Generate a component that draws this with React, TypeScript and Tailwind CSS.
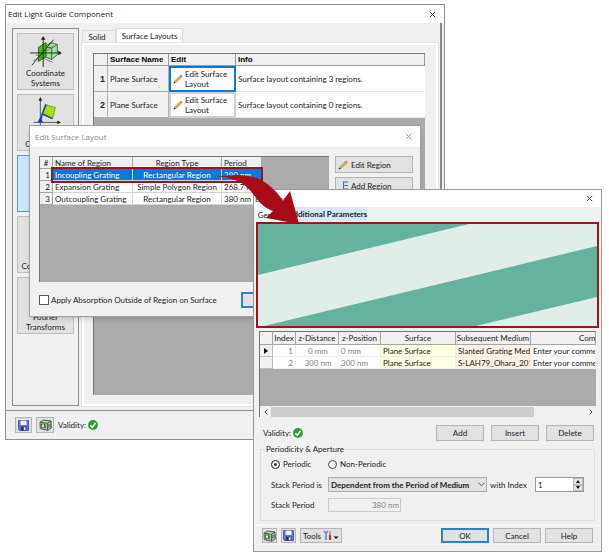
import React from "react";

const btn = "border border-[#b4b4b4] bg-[#e1e1e1] flex items-center justify-center";

function Pencil({ size = 10 }: { size?: number }) {
  return (
    <svg width={size} height={size} viewBox="0 0 10 10" className="shrink-0">
      <path d="M1 9 L2 6.6 L7.4 1.2 L9 2.8 L3.5 8.1 Z" fill="#edc873" stroke="#8a6a35" strokeWidth=".5" />
      <path d="M7 1.6 L8 .6 L9.6 2.2 L8.6 3.2 Z" fill="#c98a8a" />
      <path d="M.6 9.5 L1.5 7.4 L2.7 8.6 Z" fill="#222" />
      <path d="M2.8 7.6 L8.2 2.4" stroke="#7d6028" strokeWidth=".5" />
    </svg>
  );
}

function SaveIcon() {
  return (
    <svg width="11" height="11" viewBox="0 0 11 11">
      <path d="M.5 .5 H10.5 V10.5 H1.5 L.5 9.5 Z" fill="#6674d6" stroke="#3d46a8" strokeWidth=".8" />
      <path d="M2.5 .6 H8.5 V5 H2.5 Z" fill="#eef0ff" />
      <path d="M3 6.6 H8.4 V10.5 H3 Z" fill="#2a2f70" />
      <path d="M5.8 7.2 H7.5 V10.2 H5.8 Z" fill="#e9ebfa" />
    </svg>
  );
}

function BoxIcon() {
  return (
    <svg width="13" height="12" viewBox="0 0 13 12">
      <path d="M1 3.2 L4.5 1 L12 2 L12.3 9 L8.5 11.3 L1.3 9.6 Z" fill="#b9cfae" stroke="#3f4f3f" strokeWidth=".9" />
      <path d="M1 3.2 L8.3 4.4 L12 2 M8.3 4.4 L8.5 11.3" stroke="#3f4f3f" strokeWidth=".9" fill="none" />
      <path d="M2.5 5 H5.5 V8.6 H2.5 Z" fill="#e8efc8" stroke="#2f5340" strokeWidth=".8" />
      <path d="M6.4 5.6 V9.4 M9.8 5 V8.8 M11 4.4 V8" stroke="#3a6a52" strokeWidth=".9" />
    </svg>
  );
}

function Check() {
  return (
    <svg width="10" height="10" viewBox="0 0 10 10" className="shrink-0">
      <circle cx="5" cy="5" r="4.9" fill="#2c9a2f" />
      <path d="M2.4 5.2 L4.3 7.2 L7.6 2.8" fill="none" stroke="#fff" strokeWidth="1.6" />
    </svg>
  );
}

function Close({ color }: { color: string }) {
  return (
    <svg width="7" height="7" viewBox="0 0 7 7">
      <path d="M.8 .8 L6.2 6.2 M6.2 .8 L.8 6.2" stroke={color} strokeWidth="1" />
    </svg>
  );
}

function CoordinateIcon() {
  return (
    <svg width="32" height="32" viewBox="0 0 34 34">
      <path d="M16 11 L22 7 L29 9 L29 20 L23 25 L16 22 Z" fill="#a5dba0" stroke="#2f5c2c" strokeWidth=".9" />
      <path d="M16 11 L23 13 L29 9 M23 13 V25" fill="none" stroke="#2f5c2c" strokeWidth=".9" />
      <path d="M9 12 L17 7 V22 L9 27 Z" fill="#3fc213" stroke="#1e5a10" strokeWidth=".9" />
      <path d="M0 18 H32 M14 33 V2 M2 31 L25 4" stroke="#222" strokeWidth="1" fill="none" />
      <path d="M30 15.5 L34 18 L30 20.5 Z M11.5 4 L14 0 L16.5 4 Z" fill="#222" />
      <path d="M3 27 L24 11 M6 20 L24 28" stroke="#444" strokeWidth=".6" />
    </svg>
  );
}

function PositionIcon() {
  return (
    <svg width="32" height="32" viewBox="0 0 34 34">
      <path d="M11 31 V3 M4 27 H31" stroke="#444" strokeWidth=".9" />
      <path d="M9 4 L11 0 L13 4 Z M29 25 L33 27 L29 29 Z" fill="#222" />
      <path d="M16 8 L27 11 L24 23 L13 18 Z" fill="#a4e00c" stroke="#578a12" strokeWidth=".7" />
      <path d="M11 27 L13 18 L24 23 M13 18 L17 8" stroke="#1b45b4" strokeWidth="1.6" fill="none" />
      <path d="M8 27 L11 21 L14 27 Z" fill="#1b45b4" />
    </svg>
  );
}

function SideButton({ label, icon, active }: { label: string[]; icon: React.ReactNode; active?: boolean }) {
  return (
    <button
      className={
        "flex h-[57px] w-full shrink-0 flex-col items-center border pt-[2px] leading-[10px] " +
        (active ? "border-[#4a9be0] bg-[#cce4f7]" : "border-[#bdbdbd] bg-[#e1e1e1]")
      }
    >
      <span className="flex h-8 shrink-0 items-center">{icon}</span>
      <span className="whitespace-nowrap">
        {label.map((l) => (
          <span key={l} className="block">{l}</span>
        ))}
      </span>
    </button>
  );
}

function ComponentWindow() {
  const rows = [3, 0];
  return (
    <section className="absolute top-1 left-[5px] flex h-[436px] w-[440px] flex-col border border-[#8f8f8f] bg-[#f0f0f0]">
      <header className="flex h-[18px] shrink-0 items-center justify-between bg-white pr-2 pl-[2px]">
        <h1 className="font-['Open_Sans',sans-serif]">Edit Light Guide Component</h1>
        <button aria-label="Close"><Close color="#444" /></button>
      </header>
      <div className="mr-[2px] flex min-h-0 flex-1 flex-col border-r-2 border-[#8a8a8a]">
        <div className="flex min-h-0 flex-1 gap-[3px] pt-[5px] pr-[2px] pb-1 pl-[6px]">
          <nav className="flex w-[67px] shrink-0 flex-col gap-1 border border-[#8d8d8d] p-1">
            <SideButton label={["Coordinate", "Systems"]} icon={<CoordinateIcon />} />
            <SideButton label={["Position /", "Orientation"]} icon={<PositionIcon />} />
            <SideButton
              active
              label={["Light", "Path"]}
              icon={
                <svg width="34" height="30" viewBox="0 0 34 30">
                  <circle cx="17" cy="15" r="14" fill="none" stroke="#24489c" strokeWidth="2" />
                </svg>
              }
            />
            <SideButton label={["Channel", "Configuration"]} icon={null} />
            <SideButton label={["Fourier", "Transforms"]} icon={null} />
          </nav>
          <div className="flex min-w-0 flex-1 flex-col">
            <div role="tablist" className="flex h-[15px] shrink-0 items-end">
              <button role="tab" className="h-[13px] w-[34px] border border-b-0 border-[#dcdcdc] bg-[#f0f0f0] pr-1">Solid</button>
              <button role="tab" className="h-[15px] w-[67px] border border-b-0 border-[#dcdcdc] bg-white">Surface Layouts</button>
            </div>
            <div className="flex-1 border-2 border-white bg-[#f0f0f0] pt-2 pr-[11px] pb-[9px] pl-[9px] outline outline-[#e2e2e2]">
              <div className="h-full border-t border-l border-[#777] bg-[#ababab]">
                <table className="w-full table-fixed border-separate border-spacing-0 text-left whitespace-nowrap">
                  <colgroup>
                    <col className="w-[14px]" />
                    <col className="w-[61px]" />
                    <col className="w-[67px]" />
                    <col />
                  </colgroup>
                  <thead>
                    <tr className="h-3 bg-[#f0f0f0] font-['Liberation_Sans',sans-serif] text-black">
                      <th className="border-r border-b border-[#9a9a9a]" />
                      <th className="border-r border-b border-[#9a9a9a] pl-[2px]">Surface Name</th>
                      <th className="border-r border-b border-[#9a9a9a] pl-[2px]">Edit</th>
                      <th className="border-r border-b border-[#9a9a9a] pl-[2px]">Info</th>
                    </tr>
                  </thead>
                  <tbody>
                    {rows.map((n, i) => (
                      <tr key={n} className="h-[26px]">
                        <th className="border-r border-b border-[#b0b0b0] bg-[#f0f0f0] pr-[2px] text-right font-['Liberation_Sans',sans-serif] text-[9px]">{i + 1}</th>
                        <td className="border-r border-b border-[#b0b0b0] bg-[#f0f0f0] pl-[2px]">Plane Surface</td>
                        <td className="bg-white">
                          <button
                            className={
                              "flex h-[26px] w-full items-center gap-[2px] bg-[#fdfdfd] pl-[2px] text-left leading-[10px] " +
                              (i === 0 ? "border-2 border-[#1177d0]" : "border-2 border-[#d0d0d0]")
                            }
                          >
                            <Pencil />
                            <span>Edit Surface<br />Layout</span>
                          </button>
                        </td>
                        <td className="border-b border-[#e8e8e8] bg-white pl-[2px]">Surface layout containing {n} regions.</td>
                      </tr>
                    ))}
                  </tbody>
                </table>
              </div>
            </div>
          </div>
        </div>
        <footer className="flex h-[29px] shrink-0 items-center border-t border-[#8d8d8d] pl-[9px]">
          <button aria-label="Save" className={btn + " h-4 w-[17px]"}><SaveIcon /></button>
          <button aria-label="View" className={btn + " ml-1 h-4 w-[18px]"}><BoxIcon /></button>
          <span className="mr-[2px] ml-1">Validity:</span>
          <Check />
        </footer>
      </div>
    </section>
  );
}

function LayoutWindow() {
  const rows = [
    ["Incoupling Grating", "Rectangular Region", "380 nm"],
    ["Expansion Grating", "Simple Polygon Region", "268.7 nm"],
    ["Outcoupling Grating", "Rectangular Region", "380 nm"],
  ];
  return (
    <section className="absolute top-[125px] left-[29px] flex h-[192px] w-[392px] flex-col border border-[#a0a0a0] bg-[#f0f0f0] shadow-md">
      <header className="flex h-[21px] shrink-0 items-center justify-between bg-white pr-2 pl-[5px]">
        <h2 className="font-['Open_Sans',sans-serif] text-[#8c8c8c]">Edit Surface Layout</h2>
        <button aria-label="Close"><Close color="#999" /></button>
      </header>
      <div className="flex gap-[6px] pt-[9px] pr-[7px] pl-[9px]">
        <div className="relative h-[126px] flex-1 border-t border-l border-[#777] bg-[#ababab]">
          <table className="table-fixed border-separate border-spacing-0 whitespace-nowrap">
            <colgroup>
              <col className="w-[13px]" />
              <col className="w-20" />
              <col className="w-[89px]" />
              <col className="w-10" />
            </colgroup>
            <thead>
              <tr className="h-3 bg-[#f0f0f0]">
                {["#", "Name of Region", "Region Type", "Period"].map((h, i) => (
                  <th
                    key={h}
                    className={"overflow-hidden border-r border-b border-[#a5a5a5] px-[2px] font-normal " + (i % 2 ? "text-left" : "text-center")}
                  >
                    {h}
                  </th>
                ))}
              </tr>
            </thead>
            <tbody>
              {rows.map((r, i) => (
                <tr key={r[0]} className={"h-3 " + (i === 0 ? "bg-[#0f78d4] text-white" : "bg-white")}>
                  <th className="border-r border-b border-[#a5a5a5] bg-[#f0f0f0] pr-[2px] text-right font-normal text-[#222]">{i + 1}</th>
                  <td className="border-r border-b border-[#d4d4d4] pl-[2px]">{r[0]}</td>
                  <td className="border-r border-b border-[#d4d4d4] text-center">{r[1]}</td>
                  <td className="overflow-hidden border-r border-b border-[#d4d4d4] pl-[2px]">{r[2]}</td>
                </tr>
              ))}
            </tbody>
          </table>
          <div className="absolute top-[10px] left-[11px] h-4 w-[212px] border-2 border-[#9b1420]" />
        </div>
        <div className="flex w-[78px] shrink-0 flex-col gap-1">
          <button className="flex h-[17px] items-center gap-[3px] border border-[#b4b4b4] bg-[#e1e1e1] pl-[2px]">
            <Pencil />
            Edit Region
          </button>
          <button className="flex h-[17px] items-center gap-[3px] border border-[#b4b4b4] bg-[#e1e1e1] pl-[2px]">
            <svg width="10" height="10" viewBox="0 0 10 10"><path d="M5 1 H10 M5 4.5 H10 M5 8 H10 M5.5 1 V8 M0 8.5 H3" stroke="#4c6e96" fill="none" /></svg>
            Add Region
          </button>
        </div>
      </div>
      <div className="flex items-center pt-[10px] pl-[9px]">
        <input id="absorb" type="checkbox" className="h-[10px] w-[10px] appearance-none border border-[#555] bg-white" />
        <label htmlFor="absorb" className="ml-[2px] w-[190px]">Apply Absorption Outside of Region on Surface</label>
        <button className="h-4 w-12 border-2 border-[#2b83cc] bg-[#e1e1e1]">OK</button>
      </div>
    </section>
  );
}

function StackWindow() {
  const heads = ["", "Index", "z-Distance", "z-Position", "Surface", "Subsequent Medium", "Comment"];
  const rows = [
    ["1", "0 mm", "0 mm", "Plane Surface", "Slanted Grating Medium", "Enter your comment here"],
    ["2", "300 nm", "300 nm", "Plane Surface", "S-LAH79_Ohara_2016 in", "Enter your comment here"],
  ];
  const cell = "overflow-hidden border-b border-r border-[#eee] pl-[2px] ";
  return (
    <section className="absolute top-[189px] left-[253px] flex h-[363px] w-[349px] flex-col border border-[#9a9a9a] bg-[#f0f0f0]">
      <header className="flex h-[17px] shrink-0 items-center justify-between bg-white pr-2 pl-px">
        <h2 className="font-['Open_Sans',sans-serif]">Edit Stack</h2>
        <button aria-label="Close"><Close color="#444" /></button>
      </header>
      <div role="tablist" className="flex h-[15px] shrink-0 pl-[2px]">
        <button role="tab" className="h-[15px] w-[31px] bg-[#fafafa]">General</button>
        <button role="tab" className="h-[14px] w-20 border border-[#dce6ef] bg-[#d9e8f7] text-right font-bold whitespace-nowrap">Additional Parameters</button>
      </div>
      <div className="mx-[2px] h-[106px] shrink-0 border-2 border-[#9b1420]">
        <svg className="block h-full w-full" viewBox="258 224 339 102" preserveAspectRatio="none">
          <rect x="258" y="224" width="339" height="102" fill="#e0eeea" />
          <path d="M258 224 H469 L258 275 Z" fill="#65b39e" />
          <path d="M264 326 L597 246 V297 L476 326 Z" fill="#65b39e" />
        </svg>
      </div>
      <div className="mx-[5px] mt-[3px] h-[86px] shrink-0 overflow-hidden border-t border-l border-[#777] bg-[#ababab]">
        <div className="h-[74px]">
          <table className="w-full table-fixed border-separate border-spacing-0 whitespace-nowrap">
            <colgroup>
              <col className="w-[13px]" />
              <col className="w-[23px]" />
              <col className="w-[43px]" />
              <col className="w-[42px]" />
              <col className="w-[75px]" />
              <col className="w-[75px]" />
              <col />
            </colgroup>
            <thead>
              <tr className="h-[13px] bg-[#f0f0f0]">
                {heads.map((h, i) => (
                  <th key={i} className={"overflow-hidden border-r border-b border-[#a5a5a5] font-normal " + (i === 6 ? "pl-12 text-left" : "text-center")}>{h}</th>
                ))}
              </tr>
            </thead>
            <tbody>
              {rows.map((r, i) => (
                <tr key={i} className="h-3 bg-white">
                  <th className="border-r border-b border-[#bbb] bg-[#f0f0f0]">
                    {i === 0 && <svg width="4" height="6" viewBox="0 0 4 6" className="mx-auto"><path d="M0 0 L4 3 L0 6 Z" fill="#000" /></svg>}
                  </th>
                  <td className={cell + "pr-[2px] text-right text-[#808080]"}>{r[0]}</td>
                  <td className={cell + "text-center text-[#808080]"}>{r[1]}</td>
                  <td className={cell + "text-[#808080]"}>{r[2]}</td>
                  <td className={cell + "bg-[#ffffe1]"}>{r[3]}</td>
                  <td className={cell + "bg-[#fdf1e3]"}>{r[4]}</td>
                  <td className={cell}>{r[5]}</td>
                </tr>
              ))}
            </tbody>
          </table>
        </div>
        <div className="flex h-[11px] items-center bg-[#f0f0f0]">
          <button aria-label="Scroll left" className="flex w-[11px] justify-center">
            <svg width="4" height="6" viewBox="0 0 4 6"><path d="M3.5 .5 L1 3 L3.5 5.5" fill="none" stroke="#444" /></svg>
          </button>
          <div className="h-[10px] flex-1 bg-[#cdcdcd]" />
          <button aria-label="Scroll right" className="flex w-[62px] justify-end pr-[3px]">
            <svg width="4" height="6" viewBox="0 0 4 6"><path d="M.5 .5 L3 3 L.5 5.5" fill="none" stroke="#444" /></svg>
          </button>
        </div>
      </div>
      <div className="mt-2 flex h-4 shrink-0 items-center gap-[7px] pr-[7px] pl-[9px]">
        <span className="flex flex-1 items-center gap-[2px]">Validity:<Check /></span>
        <button className={btn + " h-4 w-12"}>Add</button>
        <button className={btn + " h-4 w-12"}>Insert</button>
        <button className={btn + " h-4 w-12"}>Delete</button>
      </div>
      <fieldset className="mx-[6px] mt-1 h-[76px] shrink-0 border border-[#dedede] px-[10px]">
        <legend className="-ml-[6px] px-px leading-[9px]">Periodicity &amp; Aperture</legend>
        <div className="mt-[2px] flex h-4 items-center">
          <label className="flex w-[57px] items-center gap-[3px]">
            <input type="radio" name="period" defaultChecked className="h-[9px] w-[9px] appearance-none rounded-full border border-[#444] bg-white checked:bg-[#333] checked:ring-2 checked:ring-white checked:ring-inset" />
            Periodic
          </label>
          <label className="flex items-center gap-[3px]">
            <input type="radio" name="period" className="h-[9px] w-[9px] appearance-none rounded-full border border-[#444] bg-white checked:bg-[#333]" />
            Non-Periodic
          </label>
        </div>
        <div className="mt-[5px] flex h-[15px] items-center">
          <label htmlFor="mode" className="w-[57px] shrink-0">Stack Period is</label>
          <div className="relative w-[159px] shrink-0">
            <select id="mode" className="block h-[15px] w-full appearance-none border border-[#adadad] bg-[#e1e1e1] pl-[2px] font-bold">
              <option>Dependent from the Period of Medium</option>
            </select>
            <svg width="7" height="5" viewBox="0 0 7 5" className="pointer-events-none absolute top-[5px] right-[2px]"><path d="M.5 .8 L3.5 3.8 L6.5 .8" fill="none" stroke="#555" /></svg>
          </div>
          <label htmlFor="index" className="w-12 shrink-0 pl-[3px]">with Index</label>
          <div className="flex h-[15px] min-w-0 flex-1 border border-[#999] bg-white">
            <input id="index" type="text" defaultValue="1" className="w-full min-w-0 bg-white pl-[2px]" />
            <div className="flex w-[10px] shrink-0 flex-col bg-[#e6e6e6]">
              <button aria-label="Increase" className="flex flex-1 items-center justify-center border border-[#bbb]"><svg width="4" height="3" viewBox="0 0 4 3"><path d="M0 3 L2 0 L4 3 Z" fill="#111" /></svg></button>
              <button aria-label="Decrease" className="flex flex-1 items-center justify-center border border-[#bbb]"><svg width="4" height="3" viewBox="0 0 4 3"><path d="M0 0 L2 3 L4 0 Z" fill="#111" /></svg></button>
            </div>
          </div>
        </div>
        <div className="mt-[6px] flex h-[14px] items-center">
          <label htmlFor="stack" className="w-[57px]">Stack Period</label>
          <input id="stack" type="text" disabled value="380 nm" className="h-[14px] w-[73px] border border-[#ccc] bg-[#f0f0f0] pr-px text-right text-[#808080]" />
        </div>
      </fieldset>
      <footer className="mt-1 flex flex-1 items-start border-t border-white pt-[2px] pr-2 pl-2">
        <button aria-label="View" className={btn + " h-[15px] w-[15px]"}><BoxIcon /></button>
        <button aria-label="Save" className={btn + " ml-1 h-[15px] w-[15px]"}><SaveIcon /></button>
        <button className={btn + " ml-1 h-[15px] w-[42px] gap-[2px]"}>
          Tools
          <svg width="16" height="11" viewBox="0 0 16 11">
            <path d="M1 1 L3 3 V10 M5 1 L3 3" stroke="#5c82b8" strokeWidth="1.5" fill="none" />
            <path d="M7 1 V5" stroke="#888" strokeWidth="1.2" />
            <path d="M7 5 V10" stroke="#d2322c" strokeWidth="2.2" />
            <path d="M10.5 6.5 H15.5 L13 9 Z" fill="#111" />
          </svg>
        </button>
        <span className="flex-1" />
        <button className="h-[15px] w-12 border-2 border-[#2b83cc] bg-[#e1e1e1]">OK</button>
        <button className={btn + " ml-1 h-[15px] w-12"}>Cancel</button>
        <button className={btn + " ml-1 h-[15px] w-12"}>Help</button>
      </footer>
    </section>
  );
}

export default function App() {
  return (
    <main className="relative min-h-screen overflow-hidden bg-white font-[Lato,'Noto_Sans',sans-serif] text-[8px] leading-[10px] text-[#222]">
      <ComponentWindow />
      <LayoutWindow />
      <StackWindow />
      <svg className="pointer-events-none absolute top-[170px] left-[215px]" width="90" height="58" viewBox="215 170 90 58">
        <path d="M217 177 C232 174 252 173 266 183 C273 188 279 194 283 201 L290 191 L299 224 L266 218 L273 211 C268 209 262 206 257 199 C249 188 240 177 217 177 Z" fill="#a80a16" />
      </svg>
    </main>
  );
}
